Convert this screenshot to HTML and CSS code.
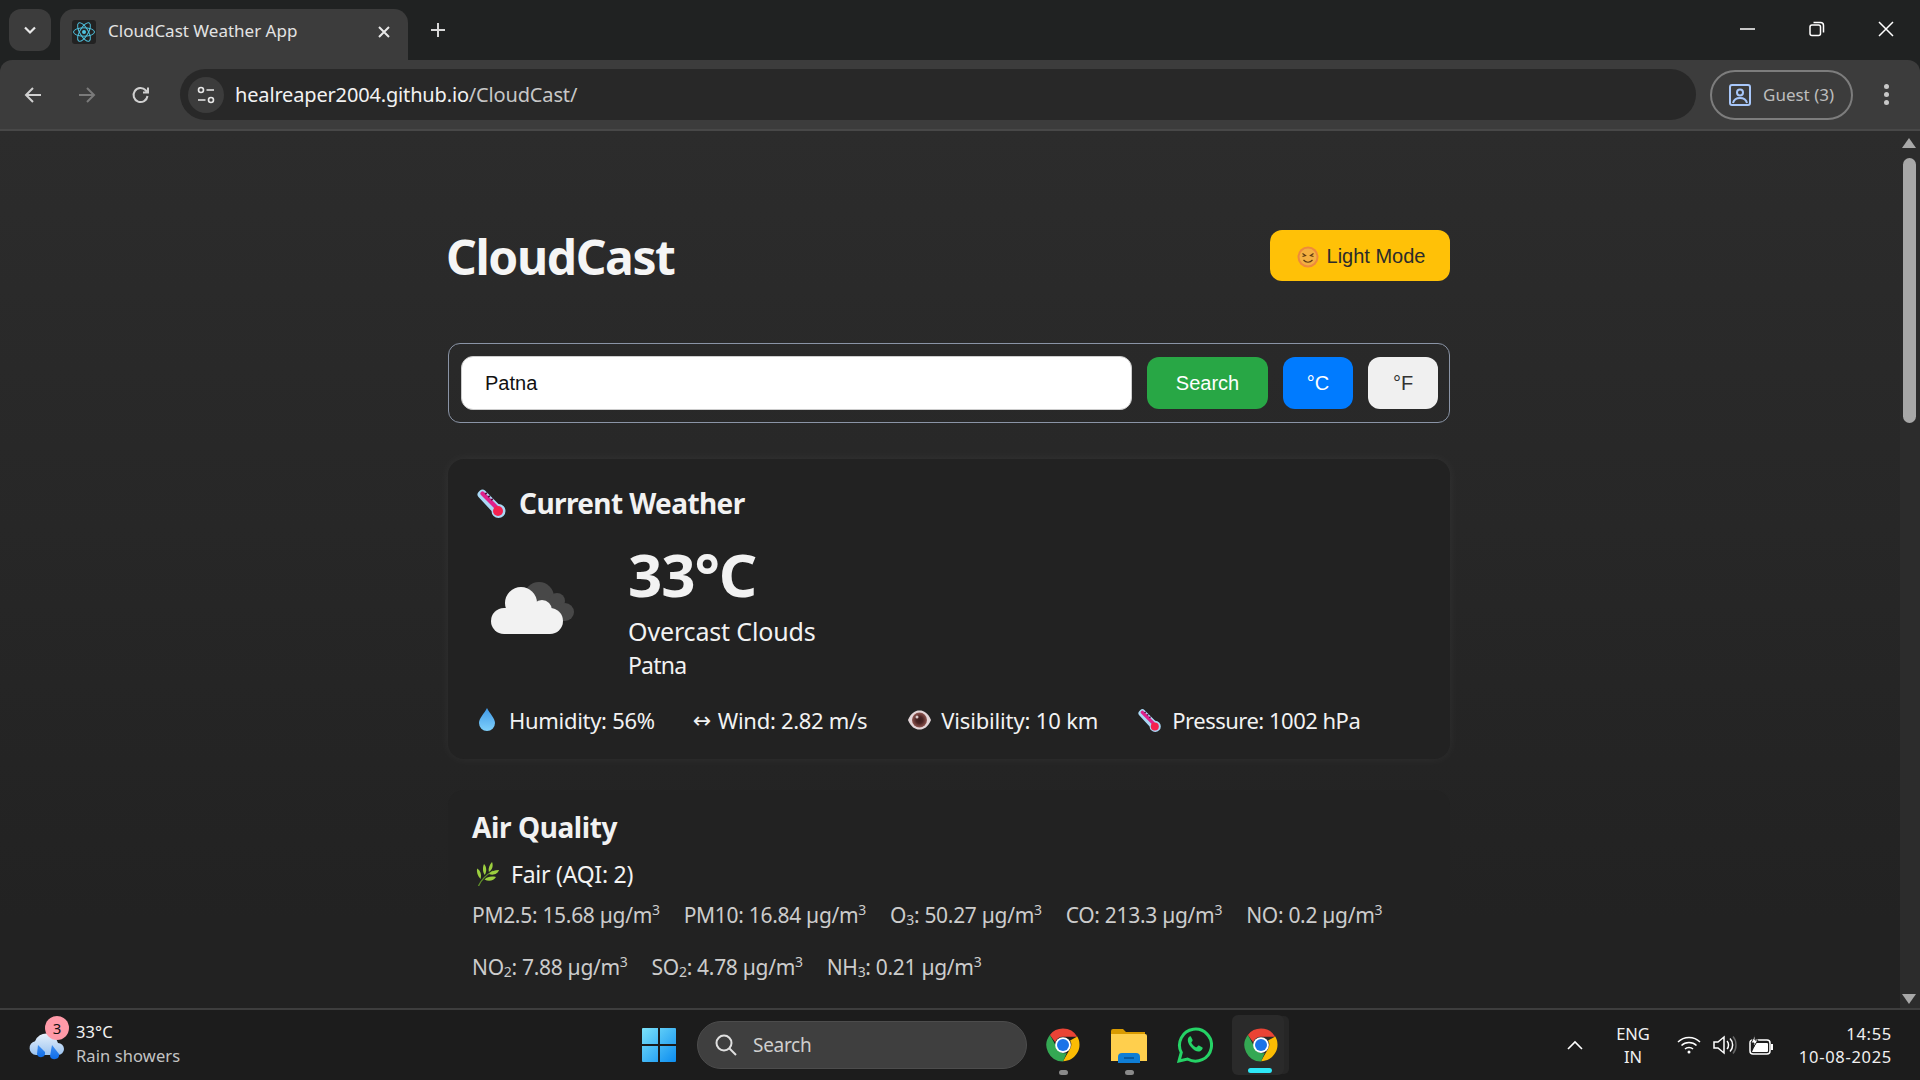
FILE: index.html
```html
<!DOCTYPE html>
<html lang="en">
<head>
  <meta charset="UTF-8" />
  <title>CloudCast Weather App</title>
  <link rel="stylesheet" href="styles.css">
</head>
<body>
  <svg class="defs" width="0" height="0">
    <defs>
      <symbol id="thermo" viewBox="0 0 30 30">
        <path d="M3 2.500c1.500-1.500 3.500-1.500 5 0l13.500 13.500a7 7 0 1 1-7 7L1.500 9c-1.500-1.500-1.500-3.500 0-5z" fill="#a9d8f5"/>
        <path d="M4 4c1-1 2-1 3 0l14 14-3 3L4 7c-1-1-1-2 0-3z" fill="#e0218a"/>
        <circle cx="21" cy="23" r="5" fill="#f5214f"/>
        <path d="M8 6l2-1M11 9l2-1M14 12l2-1" stroke="#5a1040" stroke-width="1.600"/>
      </symbol>
      <symbol id="chrome" viewBox="0 0 48 48">
        <path d="M24 2a22 22 0 0 1 19.050 11H24a11 11 0 0 0-10.400 7.400L6.500 10.500A22 22 0 0 1 24 2z" fill="#ea4335"/>
        <path d="M43.050 13A22 22 0 0 1 24 46l9.500-16.500A11 11 0 0 0 33.500 18.500z" fill="#fbbc04" transform="translate(0 -.5)"/>
        <path d="M6.500 10.500L15 26a11 11 0 0 0 14 8.600L24 46A22 22 0 0 1 6.500 10.500z" fill="#34a853"/>
        <circle cx="24" cy="24" r="10.500" fill="#fff"/>
        <circle cx="24" cy="24" r="8" fill="#1a73e8"/>
      </symbol>
    </defs>
  </svg>

  <div class="tabstrip">
    <div class="tab-list-btn">
      <svg width="16" height="16" viewBox="0 0 16 16"><path d="M3 5.500l5 5 5-5" fill="none" stroke="#e8e8e8" stroke-width="2.200"/></svg>
    </div>
    <div class="tab">
      <div class="favicon">
        <svg width="24" height="24" viewBox="0 0 24 24" fill="none" stroke="#4fc3e0" stroke-width="1">
          <ellipse cx="12" cy="12" rx="10.500" ry="4.200"/>
          <ellipse cx="12" cy="12" rx="10.500" ry="4.200" transform="rotate(60 12 12)"/>
          <ellipse cx="12" cy="12" rx="10.500" ry="4.200" transform="rotate(120 12 12)"/>
          <circle cx="12" cy="12" r="2" fill="#4fc3e0" stroke="none"/>
        </svg>
      </div>
      <span class="tab-title">CloudCast Weather App</span>
      <svg class="tab-close" width="14" height="14" viewBox="0 0 14 14"><path d="M2 2l10 10M12 2L2 12" stroke="#e8e8e8" stroke-width="2"/></svg>
    </div>
    <svg class="new-tab" width="18" height="18" viewBox="0 0 18 18"><path d="M9 2v14M2 9h14" stroke="#d8d8d8" stroke-width="2"/></svg>
    <div class="win-controls">
      <svg width="16" height="16" viewBox="0 0 16 16"><path d="M0 8h15" stroke="#fff" stroke-width="1.500"/></svg>
      <svg width="16" height="16" viewBox="0 0 16 16" fill="none" stroke="#fff" stroke-width="1.500"><rect x="1" y="4" width="10.500" height="10.500" rx="2"/><path d="M4.500 1.500h7a3 3 0 0 1 3 3v7"/></svg>
      <svg width="16" height="16" viewBox="0 0 16 16"><path d="M1 1l14 14M15 1L1 15" stroke="#fff" stroke-width="1.500"/></svg>
    </div>
  </div>

  <div class="toolbar">
    <svg class="nav-btn" width="20" height="20" viewBox="0 0 20 20" fill="none" stroke="#d0d0d0" stroke-width="2"><path d="M18 10H3M10 3l-7 7 7 7"/></svg>
    <svg class="nav-btn" width="20" height="20" viewBox="0 0 20 20" fill="none" stroke="#7a7a7a" stroke-width="2"><path d="M2 10h15M10 3l7 7-7 7"/></svg>
    <svg class="nav-btn" width="20" height="20" viewBox="0 0 20 20" fill="none" stroke="#d0d0d0" stroke-width="2"><path d="M16.500 11a7 7 0 1 1-1.800-5.700L17 7.500M17 2.500v5h-5"/></svg>
    <div class="omnibox">
      <div class="site-info">
        <svg width="20" height="20" viewBox="0 0 20 20" fill="none" stroke="#e8e8e8" stroke-width="1.600"><circle cx="5" cy="5" r="2.500"/><path d="M10.500 5H18M2 15h7.500"/><circle cx="15" cy="15" r="2.500"/></svg>
      </div>
      <span class="url"><span class="url-host">healreaper2004.github.io</span>/CloudCast/</span>
    </div>
    <div class="profile">
      <svg width="22" height="22" viewBox="0 0 22 22" fill="none" stroke="#a8c7fa" stroke-width="2"><rect x="1" y="1" width="20" height="20" rx="2"/><circle cx="11" cy="8.500" r="3"/><path d="M4 19c1-4 4-5 7-5s6 1 7 5"/></svg>
      <span>Guest (3)</span>
    </div>
    <div class="kebab"><i></i><i></i><i></i></div>
  </div>

  <div class="viewport">
    <main class="page">
      <header class="app-header">
        <h1>CloudCast</h1>
        <button class="theme-btn">
          <svg width="22" height="22" viewBox="0 0 22 22">
            <circle cx="11" cy="11" r="10.500" fill="#ee8a3c"/>
            <circle cx="11" cy="11" r="8.500" fill="#f4b040"/>
            <path d="M5.500 7.500l3 2-3 1M16.500 7.500l-3 2 3 1M6.500 14c2.500 3 6.500 3 9 0" fill="none" stroke="#5c3a12" stroke-width="1.200"/>
          </svg>
          Light Mode
        </button>
      </header>

      <form class="search-bar">
        <input class="city-input" type="text" value="Patna" />
        <button type="button" class="btn btn-search">Search</button>
        <button type="button" class="btn btn-unit btn-active">°C</button>
        <button type="button" class="btn btn-unit">°F</button>
      </form>

      <section class="card current">
        <h2 class="current-title"><svg width="30" height="30"><use href="#thermo"/></svg>Current Weather</h2>
        <div class="current-main">
          <svg class="cloud" width="86" height="56" viewBox="0 0 86 56">
            <g fill="#484848">
              <circle cx="49" cy="17" r="15"/><circle cx="67" cy="21" r="8"/><circle cx="75" cy="32" r="9"/><rect x="45" y="25" width="30" height="16"/>
            </g>
            <g fill="#f2f2f2">
              <circle cx="31" cy="23" r="16"/><circle cx="52" cy="30" r="10"/>
              <rect x="1" y="28" width="72" height="26" rx="13"/>
            </g>
          </svg>
          <div>
            <div class="temp">33°C</div>
            <div class="desc">Overcast Clouds</div>
            <div class="city">Patna</div>
          </div>
        </div>
        <div class="stats">
          <span class="stat stat-humidity">
            <svg width="20" height="24" viewBox="0 0 20 24"><defs><linearGradient id="drop" x1="0" y1="0" x2="0" y2="1"><stop offset="0" stop-color="#3f9ae8"/><stop offset="1" stop-color="#7fd0fb"/></linearGradient></defs><path d="M10 0c3 6 8 10 8 15a8 8 0 0 1-16 0C2 10 7 6 10 0z" fill="url(#drop)"/></svg>
            Humidity: 56%
          </span>
          <span class="stat stat-wind"><span class="arrow">↔</span>Wind: 2.82 m/s</span>
          <span class="stat stat-visibility">
            <svg width="23" height="20" viewBox="0 0 23 20">
              <defs><radialGradient id="iris"><stop offset="0" stop-color="#3a1c1c"/><stop offset=".45" stop-color="#4a2424"/><stop offset="1" stop-color="#8f5550"/></radialGradient></defs>
              <path d="M0 10C3 3 7 .5 11.500 .5S20 3 23 10c-3 7-7 9.500-11.500 9.500S3 17 0 10z" fill="#e3d5d8"/>
              <circle cx="11.500" cy="10" r="7.500" fill="url(#iris)"/>
              <circle cx="9" cy="7" r="1.500" fill="#d8c8c8"/>
            </svg>
            Visibility: 10 km
          </span>
          <span class="stat stat-pressure"><svg width="24" height="24"><use href="#thermo"/></svg>Pressure: 1002 hPa</span>
        </div>
      </section>

      <section class="card air">
        <h2 class="air-title">Air Quality</h2>
        <div class="air-status">
          <svg width="24" height="24" viewBox="0 0 24 24">
            <path d="M3.500 24C6 18 11 13 18 9" fill="none" stroke="#5f8f2a" stroke-width="1.400"/>
            <g fill="#9ccf3f">
              <path d="M5.500 17C2.500 14 1.500 10 2 6.500c3 1.500 5 5.500 3.500 10.500z"/>
              <path d="M9.800 13C7.500 10 7.500 5.500 9 2c2.500 2.500 3 7 .8 11z"/>
              <path d="M13.800 10C13 6.500 14.500 2.500 17 0c1.500 3.500 .5 7.500-3.200 10z"/>
              <path d="M14 12c2-3 5.500-4 10-4-1 3.500-5.500 6-10 4z"/>
              <path d="M9.500 17.500c3-3 7-3.500 11.500-2.500-2 3.500-7 5-11.500 2.500z"/>
            </g>
          </svg>
          Fair (AQI: 2)
        </div>
        <div class="pollutants">
          <span>PM2.5: 15.68 µg/m<sup>3</sup></span>
          <span>PM10: 16.84 µg/m<sup>3</sup></span>
          <span>O<sub>3</sub>: 50.27 µg/m<sup>3</sup></span>
          <span>CO: 213.3 µg/m<sup>3</sup></span>
          <span>NO: 0.2 µg/m<sup>3</sup></span>
          <span>NO<sub>2</sub>: 7.88 µg/m<sup>3</sup></span>
          <span>SO<sub>2</sub>: 4.78 µg/m<sup>3</sup></span>
          <span>NH<sub>3</sub>: 0.21 µg/m<sup>3</sup></span>
        </div>
      </section>
    </main>

    <div class="scrollbar">
      <i class="sb-up"></i>
      <div class="sb-track"><div class="sb-thumb"></div></div>
      <i class="sb-down"></i>
    </div>
  </div>

  <footer class="taskbar">
    <div class="tb-weather">
      <div class="tb-weather-icon">
        <svg width="38" height="34" viewBox="0 0 38 34">
          <defs>
            <linearGradient id="rainCloud" x1="0" y1="0" x2="0" y2="1"><stop offset="0" stop-color="#e6f0fb"/><stop offset="1" stop-color="#9cc4f0"/></linearGradient>
            <linearGradient id="rainDrop" x1="0" y1="0" x2="0" y2="1"><stop offset="0" stop-color="#3d8df0"/><stop offset="1" stop-color="#0f6de8"/></linearGradient>
          </defs>
          <path d="M8 25a7 7 0 0 1-1-13.800 12 12 0 0 1 23 1.800 6 6 0 0 1 0 12z" fill="url(#rainCloud)"/>
          <path d="M10 15l7 7c1 6-7 7-8 2z" fill="url(#rainDrop)"/>
          <path d="M24 15l7 9c1 6-8 7-9 2z" fill="url(#rainDrop)"/>
        </svg>
        <span class="tb-badge">3</span>
      </div>
      <div class="tb-weather-text">
        <div class="tb-temp">33°C</div>
        <div class="tb-cond">Rain showers</div>
      </div>
    </div>

    <div class="tb-center">
      <svg class="tb-start" width="36" height="36" viewBox="0 0 36 36">
        <defs><linearGradient id="win" x1="0" y1="0" x2="1" y2="1"><stop offset="0" stop-color="#7be3fa"/><stop offset="1" stop-color="#0c8df0"/></linearGradient></defs>
        <path d="M1 2a1 1 0 0 1 1-1h15v16H1zM19 1h15a1 1 0 0 1 1 1v15H19zM1 19h16v16H2a1 1 0 0 1-1-1zM19 19h16v15a1 1 0 0 1-1 1H19z" fill="url(#win)"/>
      </svg>
      <div class="tb-search">
        <svg width="24" height="24" viewBox="0 0 24 24" fill="none" stroke="#e0e0e0" stroke-width="2"><circle cx="10" cy="10" r="7.500"/><path d="M15.500 15.500L22 22"/></svg>
        <span>Search</span>
      </div>
      <div class="tb-app tb-pinned"><svg width="36" height="36"><use href="#chrome"/></svg></div>
      <div class="tb-app tb-pinned">
        <svg width="36" height="36" viewBox="0 0 36 36">
          <path d="M0 4a2 2 0 0 1 2-2h10l3 3h19v8H0z" fill="#d99a00"/>
          <path d="M0 7h34a2 2 0 0 1 2 2v25H0z" fill="#ffcf4d"/>
          <path d="M7 30a4 4 0 0 1 4-4h14a4 4 0 0 1 4 4v6H7z" fill="#0f7ed6"/>
          <path d="M13 31h10" stroke="#07508f" stroke-width="1.500"/>
        </svg>
      </div>
      <div class="tb-app">
        <svg width="36" height="36" viewBox="0 0 36 36">
          <path d="M2 34l2.300-8.500A16 16 0 1 1 10.500 32z" fill="none" stroke="#25d366" stroke-width="3"/>
          <path d="M12 10c-2 2-1.500 6 2 10s7 5.500 9.500 4c2-1.200 2.500-3 2-3.500l-3.500-2c-.5-.2-1 .2-2 1.500-.5.500-1 .5-2-.2-1.500-1-2.800-2.400-3.500-3.800-.3-.6 0-1 .8-1.800.4-.5.400-1 .2-1.500l-1.500-3c-.3-.5-1.500-.5-2 .3z" fill="#25d366"/>
        </svg>
      </div>
      <div class="tb-app tb-active"><svg width="36" height="36"><use href="#chrome"/></svg></div>
    </div>

    <div class="tb-tray">
      <svg class="tray-chevron" width="16" height="10" viewBox="0 0 16 10"><path d="M1 9l7-7 7 7" fill="none" stroke="#fff" stroke-width="1.600"/></svg>
      <div class="tray-lang">ENG<br>IN</div>
      <div class="tray-icons">
        <svg width="24" height="18" viewBox="0 0 24 18" fill="none" stroke="#fff" stroke-width="1.500"><path d="M1 6c6-6 16-6 22 0M4.500 9.500c4-4 11-4 15 0M8 13c2-2 6-2 8 0"/><circle cx="12" cy="16" r="1.500" fill="#fff" stroke="none"/></svg>
        <svg width="24" height="20" viewBox="0 0 24 20" fill="none" stroke="#fff" stroke-width="1.500"><path d="M1 7v6h4l6 5V2L5 7z"/><path d="M14 6c2 2 2 6 0 8M17 3.500c3.500 3.500 3.500 9.500 0 13"/><path d="M20 1.500c4 4.500 4 12.500 0 17" stroke="#666"/></svg>
        <svg width="24" height="20" viewBox="0 0 24 20"><rect x="1" y="5" width="20" height="14" rx="3" fill="none" stroke="#fff" stroke-width="1.500"/><path d="M7 8h11a1 1 0 0 1 1 1v7a1 1 0 0 1-1 1H3z" fill="#fff"/><rect x="22" y="9" width="2" height="6" fill="#fff"/><path d="M6 0L2 8h3l-1 5 5-8H6z" fill="#fff" stroke="#1c1c1c"/></svg>
      </div>
      <div class="tray-clock">14:55<br>10-08-2025</div>
    </div>
  </footer>
</body>
</html>
```

FILE: styles.css
```css
* {
  box-sizing: border-box;
}

body {
  margin: 0;
  height: 1080px;
  overflow: hidden;
  display: flex;
  flex-direction: column;
  background: #202222;
  color: #f2f2f2;
  font-family: "Noto Sans", sans-serif;
}

.defs {
  position: absolute;
}

/* Browser tabs */
.tabstrip {
  height: 60px;
  flex: none;
  display: flex;
  align-items: flex-end;
  padding-left: 9px;
}

.tab-list-btn {
  width: 42px;
  height: 42px;
  margin-bottom: 9px;
  margin-right: 9px;
  border-radius: 12px;
  background: #3c3c3c;
  display: flex;
  align-items: center;
  justify-content: center;
}

.tab {
  width: 348px;
  height: 51px;
  background: #3c3c3c;
  border-radius: 14px 14px 0 0;
  display: flex;
  align-items: center;
  padding: 0 17px 0 12px;
  font-size: 17px;
  letter-spacing: 0;
  color: #e3e3e3;
}

.favicon {
  width: 24px;
  height: 24px;
  background: #222;
  border-radius: 3px;
  margin-right: 12px;
  margin-top: -5px;
}

.tab-title {
  flex: 1;
  margin-top: -9px;
}

.tab-close {
  margin-top: -6px;
}

.new-tab {
  margin: 0 0 21px 21px;
}

.win-controls {
  margin-left: auto;
  align-self: flex-start;
  display: flex;
  gap: 53px;
  padding: 21px 26px 0 0;
}

/* Address bar */
.toolbar {
  height: 71px;
  flex: none;
  background: #3c3c3c;
  border-bottom: 2px solid #484848;
  border-radius: 12px 12px 0 0;
  display: flex;
  align-items: center;
  padding-left: 23px;
}

.nav-btn {
  margin-right: 34px;
}

.omnibox {
  width: 1516px;
  height: 51px;
  margin-left: -5px;
  background: #282828;
  border-radius: 26px;
  display: flex;
  align-items: center;
  padding-left: 8px;
}

.site-info {
  width: 36px;
  height: 36px;
  border-radius: 50%;
  background: #3c3c3c;
  display: flex;
  align-items: center;
  justify-content: center;
  margin-right: 11px;
}

.url {
  font-size: 20px;
  letter-spacing: -0.16px;
  color: #c7c7c7;
}

.url-host {
  color: #f2f2f2;
}

.profile {
  width: 143px;
  height: 50px;
  margin-left: 14px;
  border: 2px solid #7d7d7d;
  border-radius: 25px;
  display: flex;
  align-items: center;
  gap: 12px;
  padding-left: 17px;
  font-size: 17px;
  letter-spacing: 0;
  color: #bdbdbd;
}

.kebab {
  margin-left: 31px;
  display: flex;
  flex-direction: column;
  gap: 3px;
}

.kebab i {
  width: 5px;
  height: 5px;
  border-radius: 50%;
  background: #c8c8c8;
}

/* Page */
.viewport {
  flex: 1;
  min-height: 0;
  display: flex;
  background: linear-gradient(#2c2c2c, #222 90%);
}

.page {
  flex: 1;
  overflow: hidden;
  padding: 99px 2px 0 0;
}

.app-header {
  width: 1002px;
  height: 51px;
  margin: 0 auto 62px;
  display: flex;
  justify-content: space-between;
  align-items: center;
}

h1 {
  margin: 2px 0 0 -2px;
  font-size: 48px;
  font-weight: 700;
  letter-spacing: -1.4px;
  color: #f5f5f5;
}

.theme-btn {
  width: 180px;
  height: 51px;
  border: 0;
  border-radius: 12px;
  background: #ffc107;
  color: #2b2b2b;
  font-family: "Liberation Sans", sans-serif;
  font-size: 20px;
  display: flex;
  align-items: center;
  justify-content: center;
  gap: 8px;
  padding: 2px 0 0 2px;
}

.search-bar {
  width: 1002px;
  height: 80px;
  margin: 0 auto 36px;
  border: 1px solid #8a94a6;
  border-radius: 12px;
  display: flex;
  align-items: center;
  gap: 15px;
  padding: 0 11px 0 12px;
}

.city-input {
  flex: 1;
  height: 54px;
  border: 1px solid #ccc;
  border-radius: 12px;
  background: #fff;
  padding: 0 23px;
  font-family: "Liberation Sans", sans-serif;
  font-size: 20px;
  color: #111;
}

.btn {
  height: 52px;
  border: 0;
  border-radius: 12px;
  font-family: "Liberation Sans", sans-serif;
  font-size: 20px;
}

.btn-search {
  width: 121px;
  background: #28a745;
  color: #fff;
}

.btn-unit {
  width: 70px;
  background: #f0f0f0;
  color: #333;
}

.btn-active {
  background: #007bff;
  color: #fff;
}

.card {
  width: 1002px;
  margin: 0 auto;
  background: #222;
  border-radius: 16px;
  padding: 24px;
}

.current {
  height: 300px;
  margin-bottom: 31px;
  padding: 23px 28px;
  box-shadow: 0 0 12px rgba(255, 255, 255, 0.05);
}

h2 {
  margin: 0;
  font-size: 28px;
  font-weight: 700;
  letter-spacing: -0.6px;
}

.current-title {
  display: flex;
  align-items: center;
  gap: 13px;
  height: 42px;
}

.current-title svg {
  margin-left: 1px;
  margin-right: -1px;
}

.current-main {
  display: flex;
  align-items: center;
  margin-top: 11px;
}

.cloud {
  margin: 0 52px 0 14px;
}

.temp {
  font-size: 60px;
  font-weight: 700;
  line-height: 78px;
  letter-spacing: -1.1px;
}

.desc {
  font-size: 25px;
  line-height: 36px;
  letter-spacing: -0.15px;
}

.city {
  font-size: 23px;
  line-height: 32px;
  letter-spacing: -0.8px;
}

.stats {
  display: flex;
  align-items: center;
  gap: 36px;
  margin-top: 24px;
  font-size: 22px;
  letter-spacing: -0.3px;
}

.stat {
  display: flex;
  align-items: center;
  gap: 10px;
}

.stat-humidity {
  gap: 12px;
}

.stat-humidity svg {
  margin-left: 1px;
}

.stat-wind {
  gap: 7px;
  margin-left: 2px;
}

.stat-visibility {
  margin-left: 5px;
  letter-spacing: -0.15px;
}

.stat-pressure {
  margin-left: 4px;
  letter-spacing: -0.5px;
}

.arrow {
  font-family: "DejaVu Sans", sans-serif;
  font-size: 22px;
}

.air {
  height: 240px;
  padding-top: 18px;
}

.air-title {
  letter-spacing: -0.4px;
}

.air-status {
  display: flex;
  align-items: center;
  gap: 12px;
  margin-top: 12px;
  padding-left: 3px;
  font-size: 23px;
  letter-spacing: -0.25px;
}

.pollutants {
  display: flex;
  flex-wrap: wrap;
  column-gap: 24px;
  row-gap: 21px;
  margin-top: 10px;
  font-size: 21px;
  line-height: 31px;
  letter-spacing: -0.3px;
  color: #ccc;
}

.pollutants sup,
.pollutants sub {
  font-size: 14px;
  line-height: 0;
}

.pollutants sub {
  vertical-align: -2px;
}

/* Scrollbar */
.scrollbar {
  width: 20px;
  flex: none;
  background: #2c2c2c;
  display: flex;
  flex-direction: column;
  align-items: center;
  padding: 7px 2px 4px 0;
}

.sb-up,
.sb-down {
  width: 0;
  height: 0;
  border-left: 7px solid transparent;
  border-right: 7px solid transparent;
}

.sb-up {
  border-bottom: 10px solid #a8a8a8;
}

.sb-down {
  border-top: 10px solid #a8a8a8;
}

.sb-track {
  flex: 1;
  width: 100%;
  padding: 10px 2px 0 3px;
}

.sb-thumb {
  height: 265px;
  border-radius: 7px;
  background: #a8a8a8;
}

/* Windows taskbar */
.taskbar {
  height: 72px;
  flex: none;
  background: #1c1c1c;
  border-top: 2px solid #3e3e3e;
  display: flex;
  align-items: center;
  position: relative;
}

.tb-weather {
  display: flex;
  width: 641px;
  padding-left: 28px;
  gap: 10px;
}

.tb-weather-icon {
  position: relative;
  width: 38px;
  height: 34px;
  margin-top: 8px;
}

.tb-badge {
  position: absolute;
  left: 17px;
  top: -14px;
  width: 24px;
  height: 24px;
  border-radius: 50%;
  background: #ff9aa8;
  color: #111;
  font-size: 15px;
  line-height: 24px;
  text-align: center;
}

.tb-weather-text {
  font-size: 16.500px;
  line-height: 24px;
  letter-spacing: 0.1px;
  margin-top: -2px;
}

.tb-cond {
  color: #c4c4c4;
}

.tb-center {
  display: flex;
  align-items: center;
}

.tb-search {
  width: 330px;
  height: 48px;
  margin: 0 0 0 20px;
  border-radius: 24px;
  background: #3f3f3f;
  border: 1px solid #4c4c4c;
  display: flex;
  align-items: center;
  gap: 15px;
  padding-left: 16px;
  font-size: 19px;
  letter-spacing: -0.3px;
  color: #cfcfcf;
}

.tb-app {
  width: 36px;
  height: 60px;
  margin-left: 30px;
  display: flex;
  align-items: center;
  justify-content: center;
  position: relative;
}

.tb-search + .tb-app {
  margin-left: 18px;
}

.tb-pinned::after {
  content: "";
  position: absolute;
  bottom: 0;
  left: 14px;
  width: 9px;
  height: 5px;
  border-radius: 3px;
  background: #8a8a8a;
}

.tb-active {
  width: 52px;
  margin-left: 19px;
  justify-content: flex-start;
  padding-left: 11px;
  background: #2a2a2a;
  border-radius: 6px;
  box-shadow: 6px 0 0 -1px #262626;
}

.tb-active::after {
  content: "";
  position: absolute;
  bottom: 2px;
  left: 16px;
  width: 24px;
  height: 5px;
  border-radius: 3px;
  background: #2ee6f6;
}

.tb-tray {
  margin-left: auto;
  display: flex;
  align-items: center;
  padding-right: 28px;
  font-size: 16.500px;
  line-height: 23px;
  color: #f0f0f0;
}

.tray-chevron {
  margin-right: 33px;
}

.tray-lang {
  text-align: center;
  margin-right: 27px;
}

.tray-icons {
  display: flex;
  align-items: center;
  gap: 12px;
  margin-right: 26px;
}

.tray-clock {
  text-align: right;
  letter-spacing: 0.7px;
}
```
